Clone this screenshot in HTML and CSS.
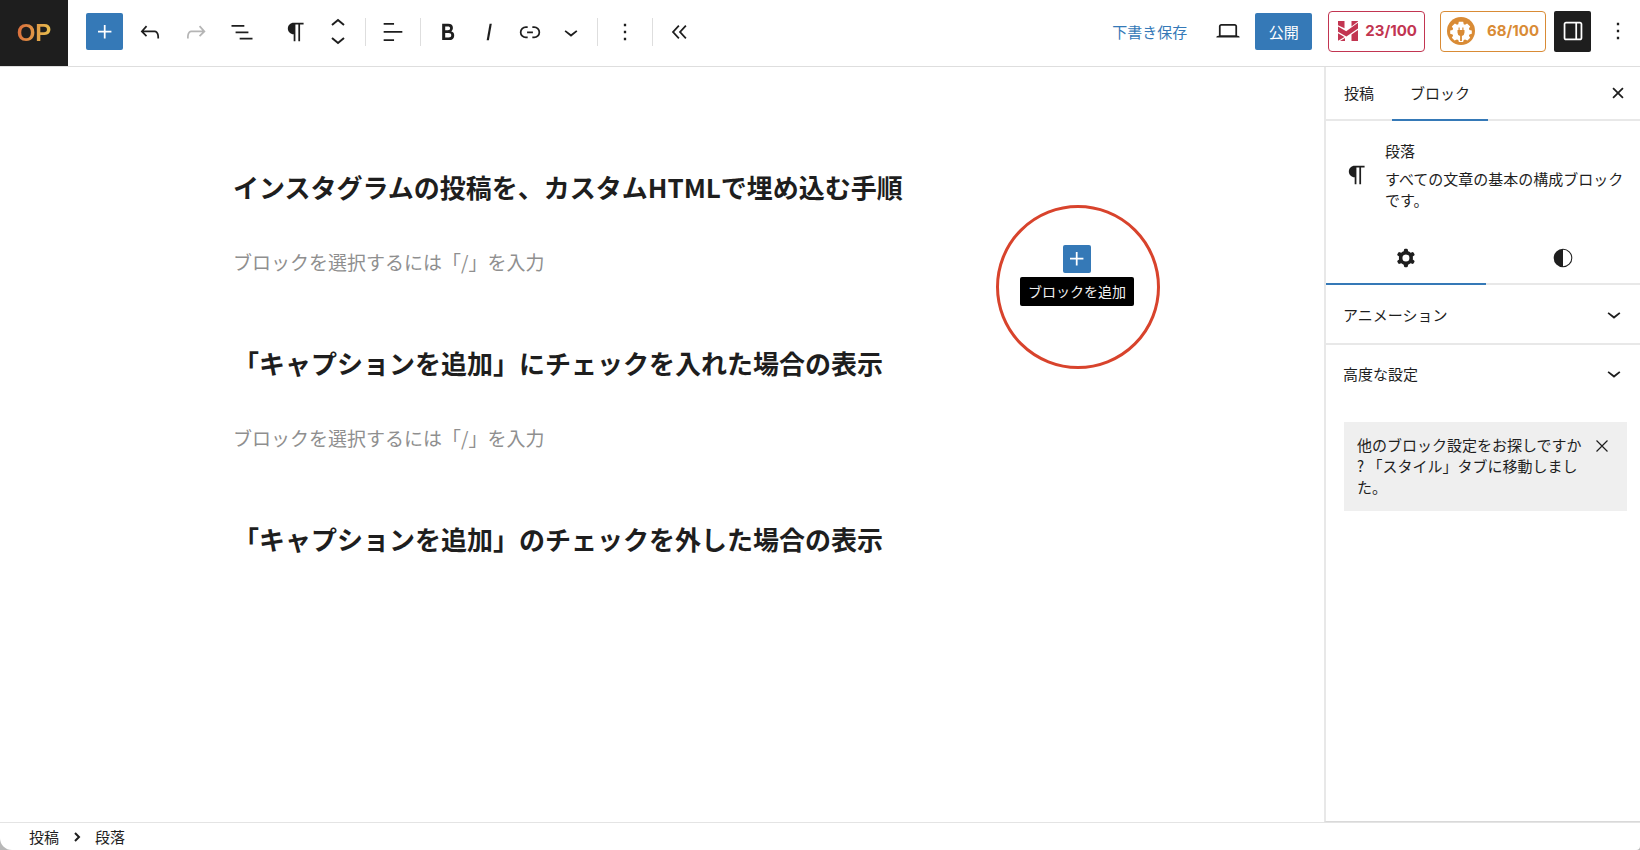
FILE: index.html
```html
<!DOCTYPE html>
<html lang="ja">
<head>
<meta charset="utf-8">
<meta name="viewport" content="width=device-width, initial-scale=1">
<title>投稿を編集</title>
<link rel="stylesheet" href="styles.css">
</head>
<body>
<div class="app">
  <header class="header">
    <a class="logo" href="#" aria-label="ダッシュボードへ戻る"><span class="logo-text">OP</span></a>
    <div class="tools">
      <button class="btn-primary btn-square" aria-label="ブロック挿入ツール"><svg class="icon" viewBox="0 0 24 24"><path d="M11 12.5V17.5H12.5V12.5H17.5V11H12.5V6H11V11H6V12.5H11Z"/></svg></button>
      <div class="group group-doc">
        <button class="tool tool-wide" aria-label="元に戻す"><svg class="icon" viewBox="0 0 24 24"><path d="M18.3 11.7c-.6-.6-1.4-.9-2.3-.9H6.7l2.9-3.3-1.1-1-4.5 5L8.5 16l1-1-2.7-2.7H16c.5 0 .9.2 1.3.5 1 1 1 3.4 1 4.5v.3h1.5v-.2c0-1.5 0-4.3-1.5-5.7z"/></svg></button>
        <button class="tool tool-wide" aria-label="やり直す" disabled><svg class="icon" viewBox="0 0 24 24"><path d="M15.6 6.5l-1.1 1 2.9 3.3H8c-.9 0-1.7.3-2.3.9-1.4 1.5-1.4 4.2-1.4 5.6v.2h1.5v-.3c0-1.1 0-3.5 1-4.5.3-.3.7-.5 1.3-.5h9.2L14.5 15l1.1 1.1 4.6-4.6-4.6-5z"/></svg></button>
        <button class="tool tool-wide" aria-label="ドキュメント概観"><svg class="icon" viewBox="0 0 24 24"><path d="M3 6h11v1.5H3V6Zm3.5 5.5h11V13h-11v-1.5ZM21 17H10v1.5h11V17Z"/></svg></button>
      </div>
      <div class="group group-block">
        <button class="tool" aria-label="段落"><svg class="icon" viewBox="0 0 24 24"><path d="m9.996 14v-.2251l.00391.0001v6.225h1.5v-14.5h2.5v14.5h1.5v-14.5h3v-1.5h-8.50391c-2.76142 0-5 2.23858-5 5 0 2.7614 2.23858 5 5 5z"/></svg></button>
        <div class="movers">
          <button class="mover" aria-label="上に移動"><svg class="icon-mover" viewBox="0 0 14 8"><path d="M1 7l6-5 6 5"/></svg></button>
          <button class="mover" aria-label="下に移動"><svg class="icon-mover" viewBox="0 0 14 8"><path d="M1 1l6 5 6-5"/></svg></button>
        </div>
      </div>
      <div class="group divided">
        <button class="tool" aria-label="配置"><svg class="icon" viewBox="0 0 24 24"><path d="M4 19.8h8.9v-1.5H4v1.5zm8.9-15.6H4v1.5h8.9V4.2zm-8.9 7v1.5h16v-1.5H4z"/></svg></button>
      </div>
      <div class="group divided group-inline">
        <button class="tool" aria-label="太字"><svg class="icon" viewBox="0 0 24 24"><path d="M14.7 11.3c1-.6 1.5-1.6 1.5-3 0-2.3-1.3-3.4-4-3.4H7v14h5.8c1.4 0 2.5-.3 3.3-1 .8-.7 1.2-1.7 1.2-2.9.1-1.9-.8-3.1-2.6-3.7zm-5.1-4h2.3c.6 0 1.1.1 1.4.4.3.3.5.7.5 1.2s-.2 1-.5 1.2c-.3.3-.8.4-1.4.4H9.6V7.3zm4.6 9c-.4.3-1 .4-1.7.4H9.6v-3.9h2.9c.7 0 1.3.2 1.7.5.4.3.6.8.6 1.5s-.2 1.2-.6 1.5z"/></svg></button>
        <button class="tool" aria-label="イタリック"><svg class="icon" viewBox="0 0 24 24"><path d="M12.5 5L10 19h1.9l2.5-14z"/></svg></button>
        <button class="tool" aria-label="リンク"><svg class="icon" viewBox="0 0 24 24"><path d="M10 17.389H8.444A5.194 5.194 0 1 1 8.444 7H10v1.5H8.444a3.694 3.694 0 0 0 0 7.389H10v1.5ZM14 7h1.556a5.194 5.194 0 0 1 0 10.39H14v-1.5h1.556a3.694 3.694 0 0 0 0-7.39H14V7Zm-4.5 6h5v-1.5h-5V13Z"/></svg></button>
        <button class="tool" aria-label="さらに表示"><svg class="icon" viewBox="0 0 24 24"><path d="M17.5 11.6L12 16l-5.5-4.4.9-1.2L12 14l4.5-3.6 1 1.2z"/></svg></button>
      </div>
      <div class="group divided">
        <button class="tool" aria-label="オプション"><svg class="icon" viewBox="0 0 24 24"><path d="M13 19h-2v-2h2v2zm0-6h-2v-2h2v2zm0-6h-2V5h2v2z"/></svg></button>
      </div>
      <div class="group divided">
        <button class="tool" aria-label="ブロックツールを隠す"><svg class="icon" viewBox="0 0 24 24"><path d="M11.6 7l-1.1-1L5 12l5.5 6 1.1-1L7 12l4.6-5zm6 0l-1.1-1-5.5 6 5.5 6 1.1-1-4.6-5 4.6-5z"/></svg></button>
      </div>
    </div>
    <div class="settings">
      <button class="btn-link">下書き保存</button>
      <button class="tool tool-wide preview" aria-label="表示"><svg class="icon" viewBox="0 0 24 24"><path d="M20.5 16h-.7V8c0-1.1-.9-2-2-2H6.2c-1.1 0-2 .9-2 2v8h-.7c-.8 0-1.5.7-1.5 1.5h20c0-.8-.7-1.5-1.5-1.5zM5.7 8c0-.3.2-.5.5-.5h11.6c.3 0 .5.2.5.5v7.6H5.7V8z"/></svg></button>
      <button class="btn-primary publish">公開</button>
      <button class="score score-red"><svg class="icon-h" viewBox="0 0 20 20"><path d="M0 0h6.500v7.300L0 4.200zM13.500 0H20v.4l-6.500 5.200zM0 5.600l8.200 4.600L20 1.800v5.800L8.400 15.600 0 10.800zM0 12.300l6.500 3.700L0 19.800zM2 20l5-3v3zM13.500 13.400L20 9v11h-6.500z"/></svg>23/100</button>
      <button class="score score-orange"><svg class="icon-gear" viewBox="0 0 28 28"><circle cx="14" cy="14" r="14" fill="#d98b35"/><path fill="#fff" d="M11.8 4.8h4.4l.5 2.4 1.3.5 2.1-1.3 3.1 3.1-1.3 2.1.5 1.3 2.4.5v3.4l-2.4.6-.5 1.3 1.3 2.1-2.8 2.8-2.3-1.2-1.4.5-.6 2.2h-4.2l-.6-2.2-1.4-.5-2.3 1.2-2.8-2.8 1.3-2.1-.5-1.3-2.4-.6v-3.4l2.4-.5.5-1.3-1.3-2.1 3.1-3.1L10 7.700l1.300-.5z"/><path fill="#d98b35" d="M11.500 10.500h1.200v2.500h2.600v-2.500h1.200V13h1v2.500a3.500 3.500 0 0 1-2.600 3.400V24h-1.800v-5.100a3.500 3.500 0 0 1-2.600-3.400V13h1z"/></svg>68/100</button>
      <button class="btn-square btn-dark" aria-label="設定"><svg class="icon" viewBox="0 0 24 24"><path fill-rule="evenodd" d="M18 4H6c-1.1 0-2 .9-2 2v12c0 1.1.9 2 2 2h12c1.1 0 2-.9 2-2V6c0-1.1-.9-2-2-2zm-4 14.500H6c-.3 0-.5-.2-.5-.5V6c0-.3.2-.5.5-.5h8v13zm4.500-.5c0 .3-.2.5-.5.5h-2.500v-13H18c.3 0 .5.2.5.5v12z"/></svg></button>
      <button class="tool options" aria-label="オプション"><svg class="icon" viewBox="0 0 24 24"><path d="M13 19h-2v-2h2v2zm0-6h-2v-2h2v2zm0-6h-2V5h2v2z"/></svg></button>
    </div>
  </header>

  <div class="body">
    <main class="canvas">
      <article class="content">
        <section class="section">
          <h2 class="heading">インスタグラムの投稿を、カスタムHTMLで埋め込む手順</h2>
          <div class="para">
            <p class="placeholder">ブロックを選択するには「/」を入力</p>
            <div class="inserter">
              <button class="btn-primary btn-add" aria-labelledby="add-tip"><svg class="icon" viewBox="0 0 24 24"><path d="M11 12.5V17.5H12.5V12.5H17.5V11H12.5V6H11V11H6V12.5H11Z"/></svg></button>
              <span class="tooltip" id="add-tip" role="tooltip">ブロックを追加</span>
              <span class="ring"></span>
            </div>
          </div>
        </section>
        <section class="section">
          <h2 class="heading">「キャプションを追加」にチェックを入れた場合の表示</h2>
          <div class="para"><p class="placeholder">ブロックを選択するには「/」を入力</p></div>
        </section>
        <section class="section">
          <h2 class="heading">「キャプションを追加」のチェックを外した場合の表示</h2>
        </section>
      </article>
    </main>

    <aside class="sidebar">
      <div class="tabs">
        <button class="tab">投稿</button>
        <button class="tab tab-active">ブロック</button>
        <button class="close" aria-label="設定を閉じる"><svg class="icon" viewBox="0 0 24 24"><path d="M12 13.06l3.712 3.713 1.061-1.06L13.061 12l3.712-3.712-1.06-1.06L12 10.938 8.288 7.227l-1.061 1.06L10.939 12l-3.712 3.712 1.06 1.061L12 13.061z"/></svg></button>
      </div>
      <div class="card">
        <svg class="icon" viewBox="0 0 24 24"><path d="m9.996 14v-.2251l.00391.0001v6.225h1.5v-14.5h2.5v14.5h1.5v-14.5h3v-1.5h-8.50391c-2.76142 0-5 2.23858-5 5 0 2.7614 2.23858 5 5 5z"/></svg>
        <div class="card-text">
          <h2 class="card-title">段落</h2>
          <p class="card-desc">すべての文章の基本の構成ブロックです。</p>
        </div>
      </div>
      <div class="subtabs">
        <button class="subtab subtab-active" aria-label="設定"><svg class="icon" viewBox="0 0 24 24"><path fill-rule="evenodd" d="M10.289 4.836A1 1 0 0111.275 4h1.306a1 1 0 01.987.836l.244 1.466c.787.26 1.503.679 2.108 1.218l1.393-.522a1 1 0 011.216.437l.653 1.13a1 1 0 01-.23 1.273l-1.148.944a6.025 6.025 0 010 2.435l1.149.946a1 1 0 01.23 1.272l-.653 1.13a1 1 0 01-1.216.437l-1.394-.522c-.605.54-1.32.958-2.108 1.218l-.244 1.466a1 1 0 01-.987.836h-1.306a1 1 0 01-.986-.836l-.244-1.466a5.995 5.995 0 01-2.108-1.218l-1.394.522a1 1 0 01-1.217-.436l-.653-1.131a1 1 0 01.23-1.272l1.149-.946a6.026 6.026 0 010-2.435l-1.148-.944a1 1 0 01-.23-1.272l.653-1.131a1 1 0 011.217-.437l1.393.522a5.994 5.994 0 012.108-1.218l.244-1.466zM14.929 12a3 3 0 11-6 0 3 3 0 016 0z"/></svg></button>
        <button class="subtab" aria-label="スタイル"><svg class="icon" viewBox="0 0 24 24"><path fill-rule="evenodd" d="M20 12a8 8 0 1 1-16 0 8 8 0 0 1 16 0Zm-.9 0a7.100 7.100 0 0 1-7.100 7.100v-14.200a7.100 7.100 0 0 1 7.100 7.100Z"/></svg></button>
      </div>
      <button class="panel">アニメーション<svg class="icon" viewBox="0 0 24 24"><path d="M17.5 11.6L12 16l-5.5-4.4.9-1.2L12 14l4.5-3.6 1 1.2z"/></svg></button>
      <button class="panel">高度な設定<svg class="icon" viewBox="0 0 24 24"><path d="M17.5 11.6L12 16l-5.5-4.4.9-1.2L12 14l4.5-3.6 1 1.2z"/></svg></button>
      <div class="notice">
        <p class="notice-text">他のブロック設定をお探しですか? 「スタイル」タブに移動しました。</p>
        <button class="notice-close" aria-label="閉じる"><svg class="icon" viewBox="0 0 24 24"><path d="M7.300 7.300l9.400 9.400M16.700 7.300l-9.400 9.400" fill="none" stroke="#1e1e1e"/></svg></button>
      </div>
    </aside>
  </div>

  <footer class="footer">
    <a class="crumb" href="#">投稿</a>
    <svg class="icon-crumb" viewBox="0 0 8 10"><path d="M2 1l4 4-4 4"/></svg>
    <a class="crumb" href="#">段落</a>
  </footer>
</div>
</body>
</html>
```
FILE: styles.css
```css
* {
  box-sizing: border-box;
}

body {
  margin: 0;
  background: #b8b8b8;
  color: #1e1e1e;
  font-family: "Noto Sans CJK JP", sans-serif;
  font-size: 15px;
  line-height: 21px;
}

h2,
p {
  margin: 0;
}

button {
  display: flex;
  align-items: center;
  justify-content: center;
  margin: 0;
  padding: 0;
  border: 0;
  background: none;
  color: inherit;
  font: inherit;
  white-space: nowrap;
  cursor: pointer;
}

svg {
  display: block;
  flex: none;
  fill: currentColor;
}

.icon {
  width: 28px;
  height: 28px;
}

.app {
  display: flex;
  flex-direction: column;
  min-height: 100vh;
  background: #fff;
  border-radius: 0 0 4px 12px;
  overflow: hidden;
}

/* Header */
.header {
  display: flex;
  justify-content: space-between;
  height: 67px;
  border-bottom: 1px solid #dedede;
}

.logo {
  display: flex;
  align-items: center;
  justify-content: center;
  width: 68px;
  height: 66px;
  background: #1e1e1e;
  text-decoration: none;
}

.logo-text {
  background: linear-gradient(100deg, #d9663b, #e8c750);
  background-clip: text;
  -webkit-background-clip: text;
  color: transparent;
  font: 700 24px/36px "Liberation Sans", sans-serif;
}

.tools {
  display: flex;
  flex: 1;
  align-items: center;
  height: 63px;
  padding-left: 18px;
}

.group {
  display: flex;
  align-items: center;
}

.group-doc {
  padding-left: 4px;
}

.group-block {
  padding: 0 6px 0 10px;
}

.divided {
  height: 28px;
  padding: 0 6px;
  border-left: 1px solid #dedede;
}

.tool {
  width: 42px;
  height: 38px;
}

.group-inline .tool {
  width: 41px;
}

.tool-wide {
  width: 46px;
}

.tool:disabled {
  color: #b5b5b5;
}

.movers {
  width: 42px;
}

.mover {
  width: 100%;
  height: 19px;
}

.icon-mover {
  width: 14px;
  height: 8px;
  fill: none;
  stroke: #1e1e1e;
  stroke-width: 2;
}

.btn-primary {
  background: #3579b7;
  border-radius: 2px;
  color: #fff;
}

.btn-square {
  width: 37px;
  height: 37px;
}

.btn-dark {
  height: 41px;
  margin-left: 8px;
  background: #1e1e1e;
  border-radius: 2px;
  color: #fff;
}

.settings {
  display: flex;
  align-items: center;
  height: 62px;
  padding-right: 1px;
}

.btn-link {
  color: #3579b7;
}

.preview {
  margin: 0 4px 0 18px;
}

.publish {
  width: 57px;
  height: 37px;
  margin-right: 16px;
}

.score {
  gap: 7px;
  height: 41px;
  padding: 0 7px 0 9px;
  border: 1px solid currentColor;
  border-radius: 4px;
  font: 700 15px/20px Inter, sans-serif;
}

.score-red {
  margin-right: 15px;
  color: #c23551;
}

.score-orange {
  gap: 12px;
  padding: 0 6px;
  color: #d98b35;
}

.icon-h {
  width: 20px;
  height: 20px;
}

.icon-gear {
  width: 28px;
  height: 28px;
}

.options {
  margin-left: 6px;
}

/* Editor */
.body {
  display: flex;
  flex: 1;
}

.canvas {
  flex: 1;
  padding: 101px 24px 0;
}

.content {
  max-width: 858px;
  margin: 0 auto;
}

.section {
  padding-bottom: 65px;
}

.heading {
  font-size: 26px;
  font-weight: 700;
  line-height: 37px;
}

.para {
  display: flex;
  justify-content: space-between;
  height: 34px;
  margin-top: 40px;
}

.placeholder {
  color: #8f8f8f;
  font-size: 19px;
  line-height: 34px;
}

.inserter {
  position: relative;
}

.btn-add {
  width: 28px;
  height: 28px;
}

.tooltip {
  position: absolute;
  top: 32px;
  left: 50%;
  padding: 0 8px;
  transform: translateX(-50%);
  background: #000;
  border-radius: 2px;
  color: #f0f0f0;
  font-size: 14px;
  line-height: 29px;
  white-space: nowrap;
}

.ring {
  position: absolute;
  top: -40px;
  left: -67px;
  width: 164px;
  height: 164px;
  border: 3px solid #d8432c;
  border-radius: 50%;
  pointer-events: none;
}

/* Sidebar */
.sidebar {
  width: 316px;
  border-left: 2px solid #e8e8e8;
  border-bottom: 1px solid #d9d9d9;
}

.tabs {
  display: flex;
  height: 54px;
  border-bottom: 2px solid #e8e8e8;
}

.tab {
  height: 54px;
  padding: 0 18px 2px;
  border-bottom: 2px solid transparent;
}

.tab-active {
  border-color: #3579b7;
}

.close {
  width: 44px;
  height: 52px;
  margin-left: auto;
}

.card {
  display: flex;
  align-items: center;
  gap: 14px;
  padding: 19px 12px 25px 17px;
}

.card-text {
  display: flex;
  flex: 1;
  flex-direction: column;
  gap: 7px;
}

.card-title {
  font-size: 15px;
  font-weight: 400;
}

.subtabs {
  display: grid;
  grid-template-columns: 160px 1fr;
  height: 50px;
  border-bottom: 2px solid #e8e8e8;
}

.subtab {
  height: 50px;
  padding-bottom: 2px;
  border-bottom: 2px solid transparent;
}

.subtab-active {
  border-color: #3579b7;
}

.panel {
  justify-content: space-between;
  width: 100%;
  height: 58px;
  padding: 0 12px 0 17px;
}

.panel + .panel {
  border-top: 2px solid #e8e8e8;
}

.notice {
  display: flex;
  justify-content: space-between;
  margin: 21px 13px 20px 18px;
  padding: 12px 11px 14px 13px;
  background: #efefef;
}

.notice-text {
  width: 228px;
  line-break: anywhere;
}

.notice-close {
  width: 28px;
  height: 24px;
}

/* Footer */
.footer {
  display: flex;
  align-items: center;
  gap: 14px;
  height: 28px;
  padding-left: 29px;
  border-top: 1px solid #e4e4e4;
}

.crumb {
  color: inherit;
  text-decoration: none;
}

.icon-crumb {
  width: 8px;
  height: 10px;
  fill: none;
  stroke: #1e1e1e;
  stroke-width: 2;
}
```
